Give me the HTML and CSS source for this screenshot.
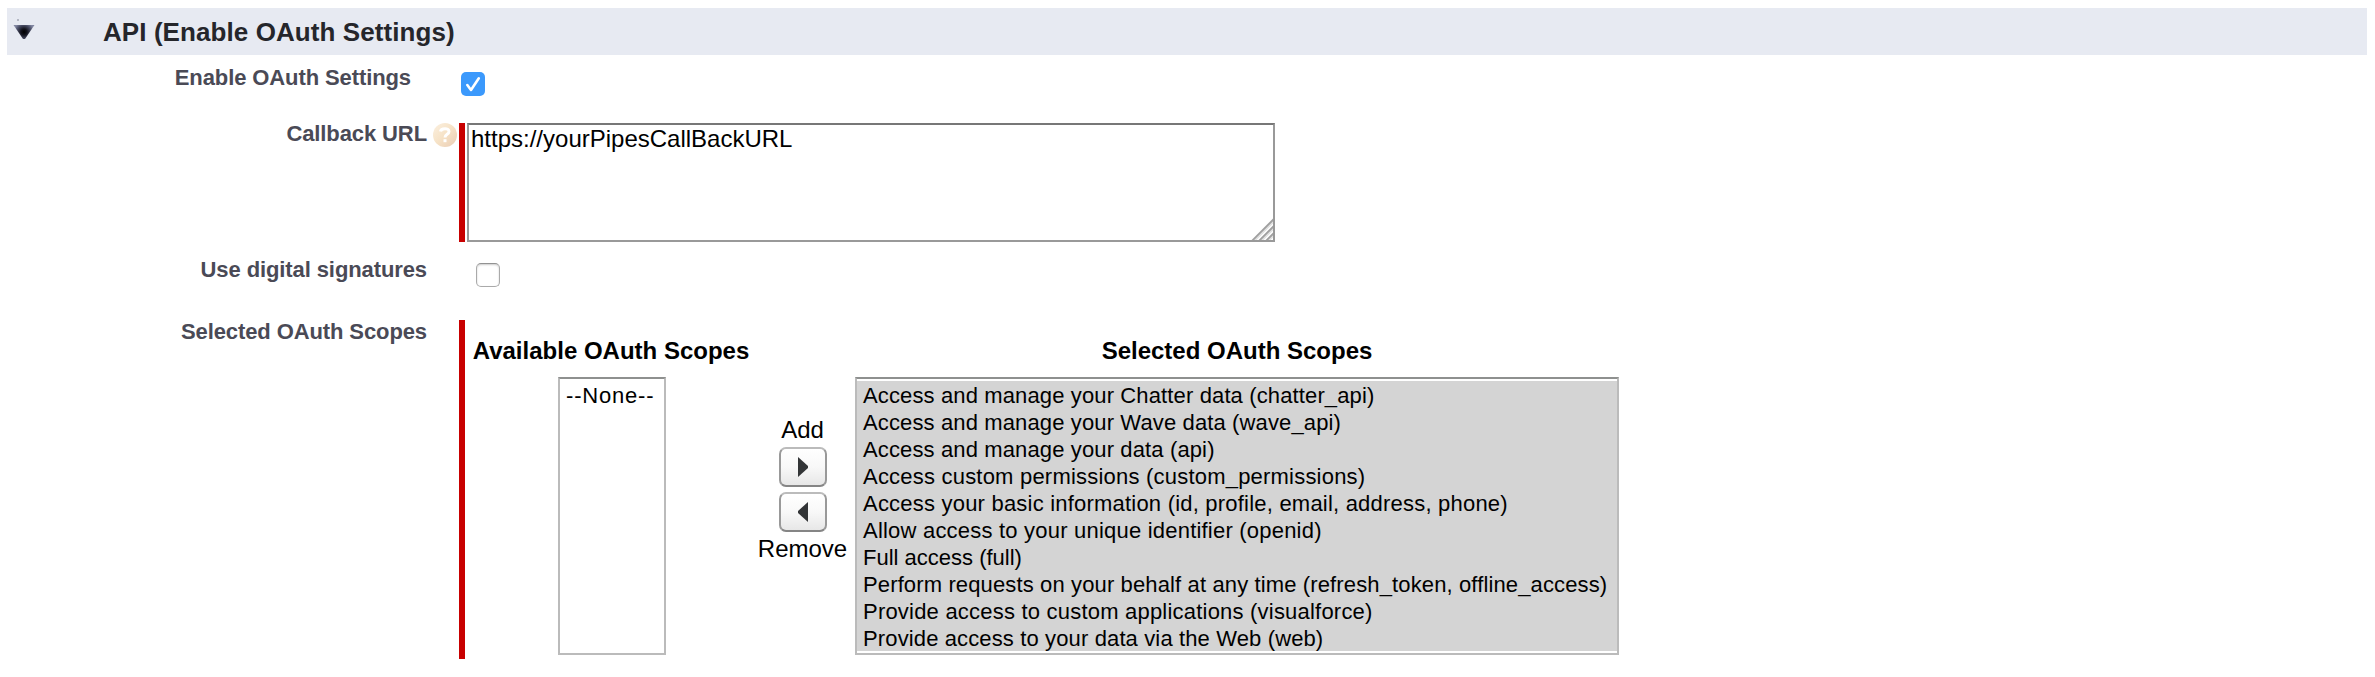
FILE: index.html
```html
<!DOCTYPE html>
<html lang="en">
<head>
<meta charset="utf-8">
<title>API (Enable OAuth Settings)</title>
<link rel="stylesheet" href="styles.css">
</head>
<body>
<main class="section">
  <header class="section-head">
    <svg class="twisty" width="22" height="22" viewBox="0 0 22 22">
      <defs><radialGradient id="tw" cx="11" cy="13" r="10" gradientUnits="userSpaceOnUse"><stop offset="0" stop-color="#000"/><stop offset=".3" stop-color="#12131c"/><stop offset=".7" stop-color="#4a4e66"/><stop offset="1" stop-color="#8085a0"/></radialGradient></defs>
      <rect x="4" y="0" width="2" height="2" fill="#b4b8c4"/>
      <path d="M0.500 6H21.500L12 20H10Z" fill="url(#tw)"/>
    </svg>
    <h1 class="title">API (Enable OAuth Settings)</h1>
  </header>

  <div class="row row-enable">
    <span class="label">Enable OAuth Settings</span>
    <span class="check check-on">
      <svg width="24" height="24" viewBox="0 0 24 24"><path d="M6.300 13L10 18L17.800 6.300" fill="none" stroke="#fff" stroke-width="2.600" stroke-linecap="round" stroke-linejoin="round"/></svg>
    </span>
  </div>

  <div class="row row-callback">
    <span class="label">Callback URL</span>
    <svg class="help" width="24" height="24" viewBox="0 0 24 24">
      <defs><linearGradient id="hp" x1="0" y1="0" x2="1" y2="1"><stop offset="0" stop-color="#fbf0e0"/><stop offset=".5" stop-color="#f6e2c6"/><stop offset="1" stop-color="#e9ccb4"/></linearGradient></defs>
      <circle cx="12" cy="12" r="12" fill="url(#hp)"/>
      <path d="M7.500 8.500C8 5 16 4.500 16 8.500C16 11.500 12 11 12 14.500" fill="none" stroke="#fff" stroke-width="3"/>
      <rect x="10.500" y="16.200" width="3" height="3" fill="#fff"/>
    </svg>
    <span class="required"></span>
    <div class="textarea">
      <span>https://yourPipesCallBackURL</span>
      <svg class="grip" width="22" height="22" viewBox="0 0 22 22">
        <g fill="none" stroke-width="2"><path d="M1 23L23 1M8 23L23 8M15 23L23 15" stroke="#a0a0a0"/><path d="M3.500 23L23 3.500M10.500 23L23 10.500M17.500 23L23 17.500" stroke="#dedede" stroke-width="1.500"/></g>
      </svg>
    </div>
  </div>

  <div class="row row-digital">
    <span class="label">Use digital signatures</span>
    <span class="check check-off"></span>
  </div>

  <div class="row row-scopes">
    <span class="label">Selected OAuth Scopes</span>
    <span class="required"></span>
    <div class="picker">
      <div class="column available">
        <h2 class="heading">Available OAuth Scopes</h2>
        <ul class="listbox"><li>--None--</li></ul>
      </div>
      <div class="actions">
        <span class="action">Add</span>
        <button class="move" aria-label="Add"><svg width="10" height="20" viewBox="0 0 10 20"><path d="M0 0L10 9V11L0 20Z" fill="#333537"/></svg></button>
        <button class="move" aria-label="Remove"><svg width="10" height="20" viewBox="0 0 10 20"><path d="M10 0L0 9V11L10 20Z" fill="#333537"/></svg></button>
        <span class="action action-remove">Remove</span>
      </div>
      <div class="column selected">
        <h2 class="heading">Selected OAuth Scopes</h2>
        <ul class="listbox">
          <li>Access and manage your Chatter data (chatter_api)</li>
          <li>Access and manage your Wave data (wave_api)</li>
          <li>Access and manage your data (api)</li>
          <li class="loose">Access custom permissions (custom_permissions)</li>
          <li class="loose">Access your basic information (id, profile, email, address, phone)</li>
          <li class="loose">Allow access to your unique identifier (openid)</li>
          <li class="tight">Full access (full)</li>
          <li>Perform requests on your behalf at any time (refresh_token, offline_access)</li>
          <li class="loose">Provide access to custom applications (visualforce)</li>
          <li>Provide access to your data via the Web (web)</li>
        </ul>
      </div>
    </div>
  </div>
</main>
</body>
</html>
```
FILE: styles.css
```css
* { box-sizing: border-box; }
body {
  margin: 0;
  background: #fff;
  color: #000;
  font: 24px/28px "Liberation Sans", Arial, sans-serif;
  overflow: hidden;
}
h1, h2, ul { margin: 0; padding: 0; }
.section { padding: 8px 8px 0 7px; }
.section-head {
  display: flex;
  height: 47px;
  padding-left: 6px;
  background: #e7eaf2;
}
.twisty { margin-top: 11px; }
.title {
  margin: 9px 0 0 68px;
  font-size: 26px;
  line-height: 30px;
  letter-spacing: 0.08px;
  color: #25262b;
}
.row { display: flex; align-items: flex-start; }
.label {
  flex: none;
  width: 420px;
  margin-right: 32px;
  text-align: right;
  font-size: 22px;
  line-height: 26px;
  font-weight: bold;
  letter-spacing: -0.1px;
  color: #4a4a56;
}
.required { flex: none; align-self: stretch; width: 6px; background: #c80000; }
.check { display: block; width: 24px; height: 24px; border-radius: 5px; }
.check svg { display: block; }

.row-enable { height: 68px; padding-top: 10px; }
.row-enable .label { width: 404px; margin-right: 50px; }
.check-on { margin-top: 7px; background: #3b99fc; }

.row-callback { height: 119px; }
.row-callback .label { margin: -2px 6px 0 0; }
.row-callback .help { flex: none; margin: 0 2px 0 0; }
.textarea {
  position: relative;
  width: 808px;
  height: 119px;
  margin-left: 2px;
  padding: 0 2px;
  border: 2px solid #999;
  border-top-color: #777;
}
.grip { position: absolute; right: 0; bottom: 0; }

.row-digital { height: 78px; padding-top: 14px; }
.row-digital .label { margin-top: 1px; }
.check-off {
  margin: 7px 0 0 17px;
  border: 1px solid #aaa;
  border-top-color: #929292;
  box-shadow: inset 0 1px 2px #ccc;
}

.row-scopes { height: 339px; }
.row-scopes .label { margin-top: -1px; }
.picker { display: flex; padding-top: 17px; }
.column { display: flex; flex-direction: column; align-items: center; }
.available { width: 294px; }
.heading { font-size: 24px; line-height: 28px; white-space: nowrap; }
.available .heading { margin-right: 2px; }
.listbox {
  width: 108px;
  height: 278px;
  margin-top: 12px;
  padding: 2px 0;
  border: 2px solid #bbb;
  border-top-color: #8e908f;
  list-style: none;
  font-size: 22px;
  line-height: 27px;
  letter-spacing: 0.13px;
  white-space: nowrap;
}
.listbox li { height: 27px; padding: 1px 0 0 6px; }
.available li { letter-spacing: 0.8px; }
.selected .listbox { width: 764px; }
.selected li { background: #d4d4d4; }
.selected .loose { letter-spacing: 0.21px; }
.selected .tight { letter-spacing: 0; }
.actions {
  display: flex;
  flex-direction: column;
  align-items: center;
  width: 87px;
  margin-right: 9px;
  padding-top: 79px;
}
.move {
  display: flex;
  align-items: center;
  justify-content: center;
  width: 48px;
  height: 40px;
  margin-bottom: 5px;
  padding: 0;
  border: 2px solid;
  border-color: #bbb #999 #858585 #999;
  border-radius: 7px;
  background: linear-gradient(#fff, #f8f8f8 50%, #e7e7e7);
}
.action { height: 31px; }
.action-remove { margin-top: -2px; }
```
